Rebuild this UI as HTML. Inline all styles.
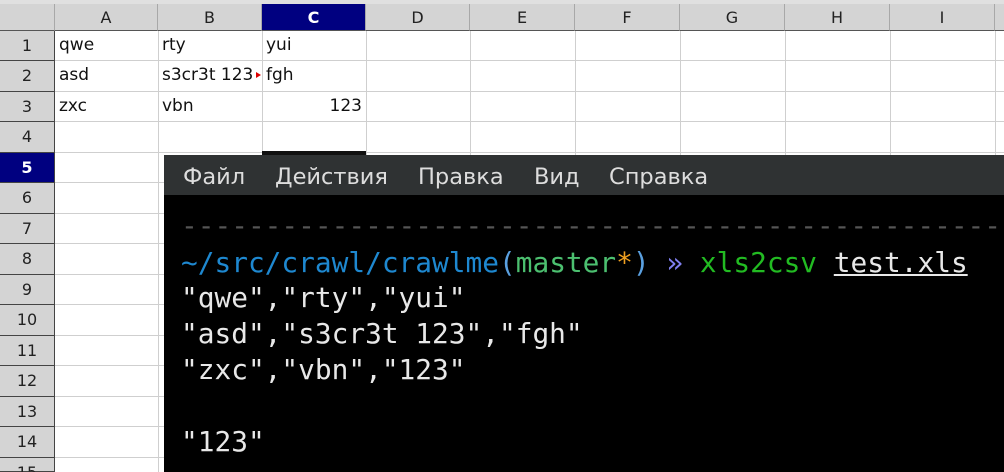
<!DOCTYPE html>
<html><head><meta charset="utf-8"><style>
*{margin:0;padding:0;box-sizing:border-box}
html,body{width:1004px;height:472px;overflow:hidden}
body{background:#fff;position:relative;font-family:"DejaVu Sans","Liberation Sans",sans-serif}
.a{position:absolute}
.ch{position:absolute;top:4px;height:27px;background:#d4d4d4;border-right:1px solid #a8a8a8;border-bottom:1px solid #555;font-size:16px;color:#222;text-align:center;line-height:27px}
.rh{position:absolute;left:0;width:55px;height:30.5px;background:#d4d4d4;border-bottom:1.5px solid #444;border-right:1.5px solid #444;font-size:16px;color:#222;text-align:center;line-height:30px}
.vl{position:absolute;top:31px;width:1px;height:441px;background:#cfcfcf}
.hl{position:absolute;left:55px;width:949px;height:1px;background:#cfcfcf}
.c{position:absolute;font-size:17px;color:#111;line-height:30px}
.t{position:absolute;left:181px;font-family:"DejaVu Sans Mono","Liberation Mono",monospace;font-size:27.8px;color:#e8e8e8;white-space:pre;line-height:36px}
.m{position:absolute;top:0;color:#ddd;font-size:22.5px;line-height:44px}
</style></head><body>
<div class="a" style="left:0;top:0;width:1004px;height:4px;background:#e0e0e0"></div>
<div class="ch" style="left:0;width:55px"></div>
<div class="ch" style="left:55px;width:103px">A</div>
<div class="ch" style="left:158px;width:104px">B</div>
<div class="ch" style="left:262px;width:104px;background:#000080;color:#fff;font-weight:bold">C</div>
<div class="ch" style="left:366px;width:104px">D</div>
<div class="ch" style="left:470px;width:105px">E</div>
<div class="ch" style="left:575px;width:105px">F</div>
<div class="ch" style="left:680px;width:105px">G</div>
<div class="ch" style="left:785px;width:105px">H</div>
<div class="ch" style="left:890px;width:105px">I</div>
<div class="ch" style="left:995px;width:20px"></div>
<div class="vl" style="left:158px"></div><div class="vl" style="left:262px"></div><div class="vl" style="left:366px"></div><div class="vl" style="left:470px"></div><div class="vl" style="left:575px"></div><div class="vl" style="left:680px"></div><div class="vl" style="left:785px"></div><div class="vl" style="left:890px"></div><div class="vl" style="left:995px"></div>
<div class="hl" style="top:60px"></div><div class="hl" style="top:91px"></div><div class="hl" style="top:121px"></div><div class="hl" style="top:152px"></div><div class="hl" style="top:182px"></div><div class="hl" style="top:213px"></div><div class="hl" style="top:243px"></div><div class="hl" style="top:274px"></div><div class="hl" style="top:304px"></div><div class="hl" style="top:335px"></div><div class="hl" style="top:365px"></div><div class="hl" style="top:396px"></div><div class="hl" style="top:426px"></div><div class="hl" style="top:457px"></div>
<div class="rh" style="top:30.5px">1</div><div class="rh" style="top:61px">2</div><div class="rh" style="top:91.5px">3</div><div class="rh" style="top:122px">4</div>
<div class="rh" style="top:152.5px;background:#000080;color:#fff;font-weight:bold">5</div>
<div class="rh" style="top:183px">6</div><div class="rh" style="top:213.5px">7</div><div class="rh" style="top:244px">8</div><div class="rh" style="top:274.5px">9</div><div class="rh" style="top:305px">10</div><div class="rh" style="top:335.5px">11</div><div class="rh" style="top:366px">12</div><div class="rh" style="top:396.5px">13</div><div class="rh" style="top:427px">14</div><div class="rh" style="top:457.5px;height:14.5px">15</div>
<div class="c" style="left:59px;top:30px">qwe</div><div class="c" style="left:162px;top:30px">rty</div><div class="c" style="left:266px;top:30px">yui</div>
<div class="c" style="left:59px;top:60px">asd</div><div class="c" style="left:162px;top:60px;width:95px;overflow:hidden;white-space:nowrap">s3cr3t 123</div><div class="a" style="left:256px;top:72px;width:0;height:0;border-left:5px solid #d00;border-top:3px solid transparent;border-bottom:3px solid transparent"></div><div class="c" style="left:266px;top:60px">fgh</div>
<div class="c" style="left:59px;top:91px">zxc</div><div class="c" style="left:162px;top:91px">vbn</div><div class="c" style="left:266px;top:91px;width:96px;text-align:right">123</div>
<div class="a" style="left:262px;top:151px;width:104px;height:4px;background:#111"></div>
<div class="a" style="left:164px;top:155px;width:840px;height:317px;background:#000"></div>
<div class="a" style="left:164px;top:155px;width:840px;height:40px;background:#2f3233">
<span class="m" style="left:19px">Файл</span><span class="m" style="left:111px">Действия</span><span class="m" style="left:254px">Правка</span><span class="m" style="left:370px">Вид</span><span class="m" style="left:445px">Справка</span>
</div>
<div class="t" style="top:208px;color:#555">--------------------------------------------------</div>
<div class="t" style="top:245px"><span style="color:#1e88d0">~/src/crawl/crawlme</span><span style="color:#5aa0e0">(</span><span style="color:#4cc070">master</span><span style="color:#f0a020">*</span><span style="color:#5aa0e0">)</span> <span style="color:#8080f0">»</span> <span style="color:#22bb22">xls2csv</span> <span style="text-decoration:underline">test.xls</span></div>
<div class="t" style="top:280px">"qwe","rty","yui"</div>
<div class="t" style="top:316px">"asd","s3cr3t 123","fgh"</div>
<div class="t" style="top:352px">"zxc","vbn","123"</div>
<div class="t" style="top:424px">"123"</div>
</body></html>
